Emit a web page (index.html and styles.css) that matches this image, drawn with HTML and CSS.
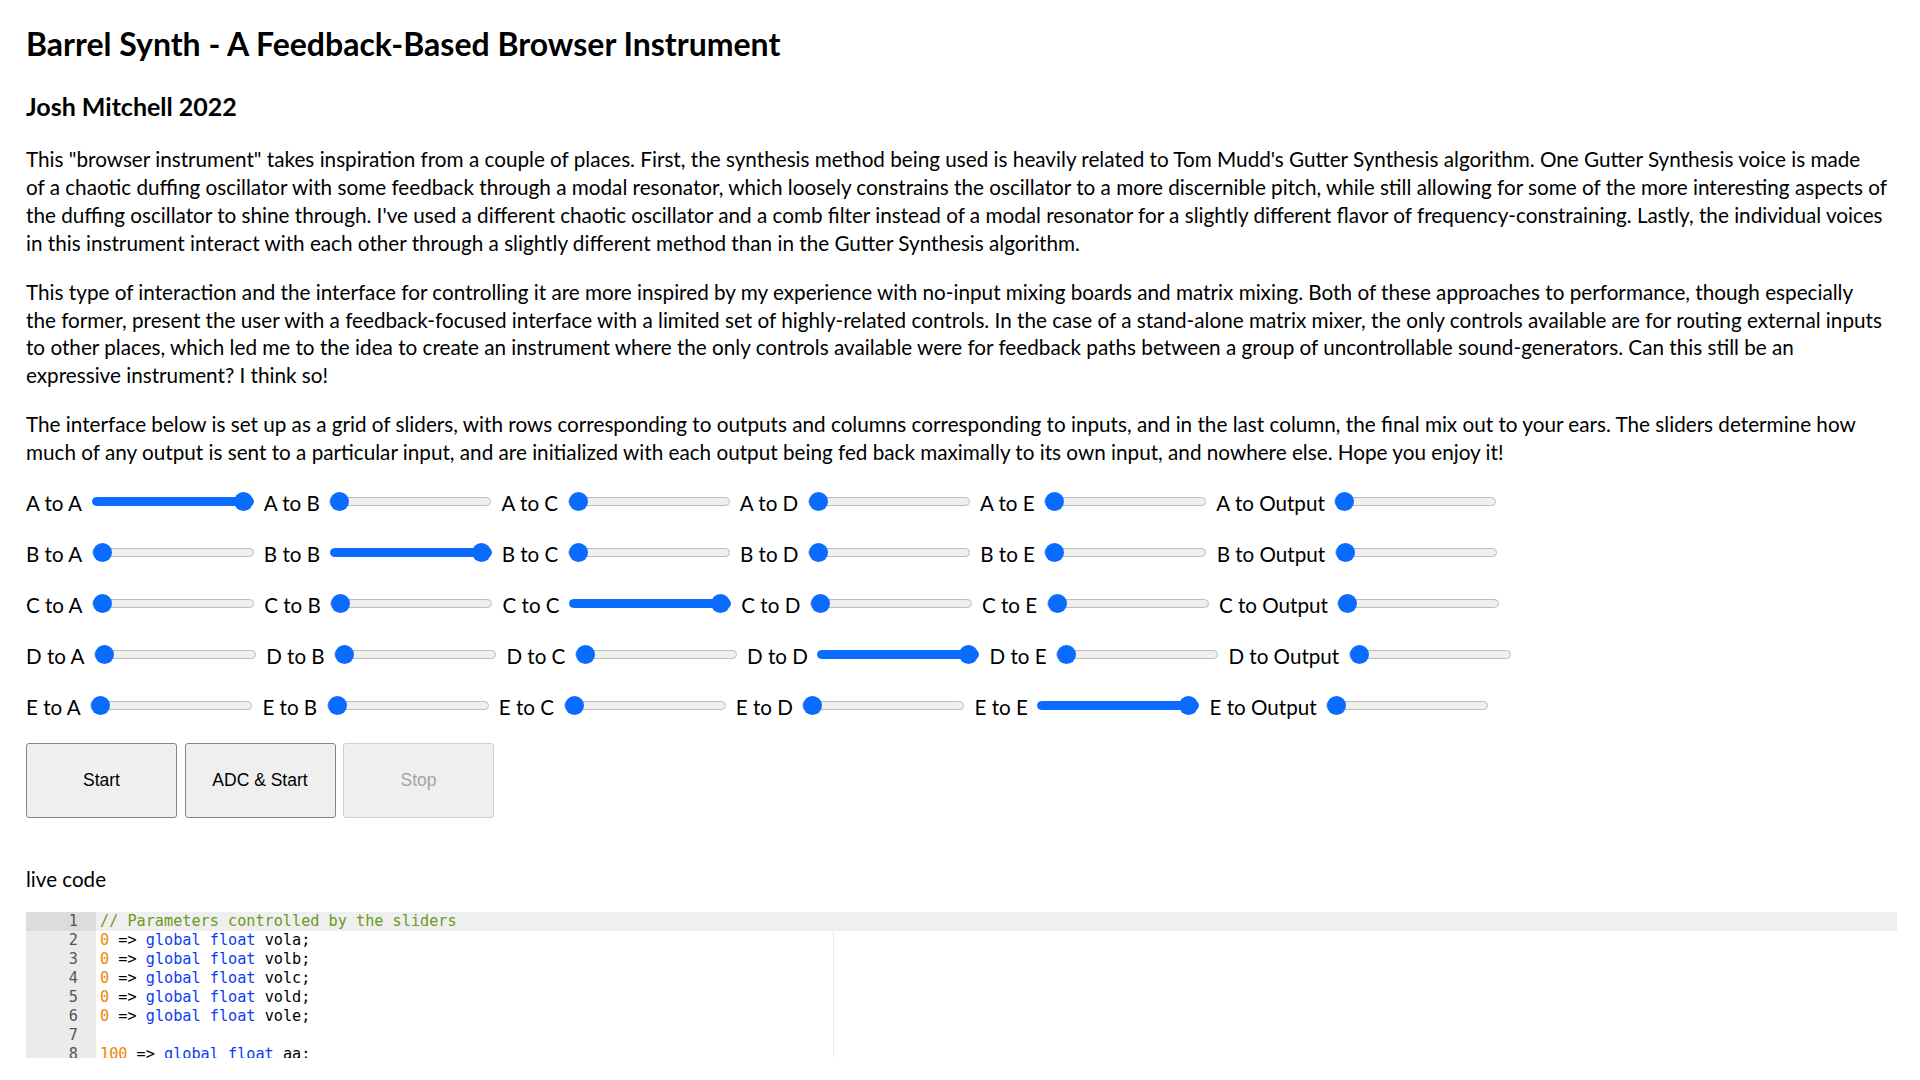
FILE: index.html
```html
<!DOCTYPE html>
<html lang="en">
<head>
<meta charset="utf-8">
<title>Barrel Synth</title>
<link rel="stylesheet" href="styles.css">
</head>
<body>
<main class="page">
  <h1 class="title">Barrel Synth - A Feedback-Based Browser Instrument</h1>
  <h2 class="author">Josh Mitchell 2022</h2>
  <p class="text">This "browser instrument" takes inspiration from a couple of places. First, the synthesis method being used is heavily related to Tom Mudd's Gutter Synthesis algorithm. One Gutter Synthesis voice is made<br>of a chaotic duffing oscillator with some feedback through a modal resonator, which loosely constrains the oscillator to a more discernible pitch, while still allowing for some of the more interesting aspects of<br>the duffing oscillator to shine through. I've used a different chaotic oscillator and a comb filter instead of a modal resonator for a slightly different flavor of frequency-constraining. Lastly, the individual voices<br>in this instrument interact with each other through a slightly different method than in the Gutter Synthesis algorithm.</p>
  <p class="text">This type of interaction and the interface for controlling it are more inspired by my experience with no-input mixing boards and matrix mixing. Both of these approaches to performance, though especially<br>the former, present the user with a feedback-focused interface with a limited set of highly-related controls. In the case of a stand-alone matrix mixer, the only controls available are for routing external inputs<br>to other places, which led me to the idea to create an instrument where the only controls available were for feedback paths between a group of uncontrollable sound-generators. Can this still be an<br>expressive instrument? I think so!</p>
  <p class="text">The interface below is set up as a grid of sliders, with rows corresponding to outputs and columns corresponding to inputs, and in the last column, the final mix out to your ears. The sliders determine how<br>much of any output is sent to a particular input, and are initialized with each output being fed back maximally to its own input, and nowhere else. Hope you enjoy it!</p>

  <div class="matrix">
    <div class="mrow">
      <label class="lbl">A to A</label><input class="slider on" type="range" min="0" max="100" value="100">
      <label class="lbl">A to B</label><input class="slider" type="range" min="0" max="100" value="0">
      <label class="lbl">A to C</label><input class="slider" type="range" min="0" max="100" value="0">
      <label class="lbl">A to D</label><input class="slider" type="range" min="0" max="100" value="0">
      <label class="lbl">A to E</label><input class="slider" type="range" min="0" max="100" value="0">
      <label class="lbl">A to Output</label><input class="slider" type="range" min="0" max="100" value="0">
    </div>
    <div class="mrow">
      <label class="lbl">B to A</label><input class="slider" type="range" min="0" max="100" value="0">
      <label class="lbl">B to B</label><input class="slider on" type="range" min="0" max="100" value="100">
      <label class="lbl">B to C</label><input class="slider" type="range" min="0" max="100" value="0">
      <label class="lbl">B to D</label><input class="slider" type="range" min="0" max="100" value="0">
      <label class="lbl">B to E</label><input class="slider" type="range" min="0" max="100" value="0">
      <label class="lbl">B to Output</label><input class="slider" type="range" min="0" max="100" value="0">
    </div>
    <div class="mrow">
      <label class="lbl">C to A</label><input class="slider" type="range" min="0" max="100" value="0">
      <label class="lbl">C to B</label><input class="slider" type="range" min="0" max="100" value="0">
      <label class="lbl">C to C</label><input class="slider on" type="range" min="0" max="100" value="100">
      <label class="lbl">C to D</label><input class="slider" type="range" min="0" max="100" value="0">
      <label class="lbl">C to E</label><input class="slider" type="range" min="0" max="100" value="0">
      <label class="lbl">C to Output</label><input class="slider" type="range" min="0" max="100" value="0">
    </div>
    <div class="mrow">
      <label class="lbl">D to A</label><input class="slider" type="range" min="0" max="100" value="0">
      <label class="lbl">D to B</label><input class="slider" type="range" min="0" max="100" value="0">
      <label class="lbl">D to C</label><input class="slider" type="range" min="0" max="100" value="0">
      <label class="lbl">D to D</label><input class="slider on" type="range" min="0" max="100" value="100">
      <label class="lbl">D to E</label><input class="slider" type="range" min="0" max="100" value="0">
      <label class="lbl">D to Output</label><input class="slider" type="range" min="0" max="100" value="0">
    </div>
    <div class="mrow">
      <label class="lbl">E to A</label><input class="slider" type="range" min="0" max="100" value="0">
      <label class="lbl">E to B</label><input class="slider" type="range" min="0" max="100" value="0">
      <label class="lbl">E to C</label><input class="slider" type="range" min="0" max="100" value="0">
      <label class="lbl">E to D</label><input class="slider" type="range" min="0" max="100" value="0">
      <label class="lbl">E to E</label><input class="slider on" type="range" min="0" max="100" value="100">
      <label class="lbl">E to Output</label><input class="slider" type="range" min="0" max="100" value="0">
    </div>
  </div>

  <div class="buttons">
    <button class="btn" type="button">Start</button>
    <button class="btn" type="button">ADC &amp; Start</button>
    <button class="btn" type="button" disabled>Stop</button>
  </div>

  <p class="live">live code</p>

  <div class="editor">
    <div class="print-margin"></div>
    <div class="line active"><span class="gut">1</span><span class="code"><span class="c-com">// Parameters controlled by the sliders</span></span></div>
    <div class="line"><span class="gut">2</span><span class="code"><span class="c-num">0</span> =&gt; <span class="c-kw">global</span> <span class="c-kw">float</span> vola;</span></div>
    <div class="line"><span class="gut">3</span><span class="code"><span class="c-num">0</span> =&gt; <span class="c-kw">global</span> <span class="c-kw">float</span> volb;</span></div>
    <div class="line"><span class="gut">4</span><span class="code"><span class="c-num">0</span> =&gt; <span class="c-kw">global</span> <span class="c-kw">float</span> volc;</span></div>
    <div class="line"><span class="gut">5</span><span class="code"><span class="c-num">0</span> =&gt; <span class="c-kw">global</span> <span class="c-kw">float</span> vold;</span></div>
    <div class="line"><span class="gut">6</span><span class="code"><span class="c-num">0</span> =&gt; <span class="c-kw">global</span> <span class="c-kw">float</span> vole;</span></div>
    <div class="line"><span class="gut">7</span><span class="code"></span></div>
    <div class="line"><span class="gut">8</span><span class="code"><span class="c-num">100</span> =&gt; <span class="c-kw">global</span> <span class="c-kw">float</span> aa;</span></div>
    <div class="line"><span class="gut">9</span><span class="code"><span class="c-num">0</span> =&gt; <span class="c-kw">global</span> <span class="c-kw">float</span> ab;</span></div>
    <div class="line"><span class="gut">10</span><span class="code"><span class="c-num">0</span> =&gt; <span class="c-kw">global</span> <span class="c-kw">float</span> ac;</span></div>
  </div>
</main>
</body>
</html>
```
FILE: styles.css
```css
* { box-sizing: border-box; }

html, body {
  margin: 0;
  padding: 0;
  background: #ffffff;
}

body {
  font-family: Lato, "Open Sans", sans-serif;
  color: #000;
}

.page {
  padding: 25px 23px 0 26px;
  display: flex;
  flex-direction: column;
}

.title {
  margin: 0;
  font-size: 32px;
  line-height: 38px;
  font-weight: 700;
}

.author {
  margin: 28px 0 0;
  font-size: 25px;
  line-height: 30px;
  font-weight: 700;
}

.text {
  margin: 21px 0 0;
  font-size: 20.7px;
  line-height: 27.9px;
  white-space: nowrap;
}

.author + .text { margin-top: 25px; }

.matrix {
  margin-top: 19px;
  display: flex;
  flex-direction: column;
  gap: 21px;
}

.mrow {
  display: flex;
  align-items: center;
  height: 30px;
}

.lbl {
  font-size: 20.6px;
  line-height: 25px;
  padding-top: 5px;
  margin-right: 9.5px;
  white-space: nowrap;
}

.slider {
  -webkit-appearance: none;
  appearance: none;
  width: 162px;
  height: 19px;
  margin: 0 10.2px 0 0;
  padding: 0;
  background: transparent;
}

.slider::-webkit-slider-runnable-track {
  height: 9px;
  border-radius: 5px;
  background: #efefef;
  border: 1px solid #bdbdbd;
}

.slider::-webkit-slider-thumb {
  -webkit-appearance: none;
  appearance: none;
  width: 19px;
  height: 19px;
  border-radius: 50%;
  background: #0a6cff;
  border: none;
  margin-top: -6px;
}

.slider.on::-webkit-slider-runnable-track {
  background: #0a6cff;
  border-color: #0a6cff;
}

.buttons {
  margin-top: 23px;
  display: flex;
  gap: 7.5px;
}

.btn {
  width: 151px;
  height: 75px;
  background: #efefef;
  border: 1.5px solid #858585;
  border-radius: 3px;
  font-family: "Liberation Sans", Arial, sans-serif;
  font-size: 17.5px;
  color: #000;
  padding: 0;
}

.btn:disabled {
  color: #a3a3a3;
  border-color: #cfcfcf;
  background: #efefef;
}

.live {
  margin: 48px 0 0;
  font-size: 20.6px;
  line-height: 27.9px;
}

.editor {
  position: relative;
  margin-top: 18px;
  height: 146px;
  overflow: hidden;
  font-family: "DejaVu Sans Mono", monospace;
  font-size: 15.2px;
  background: #fff;
}

.print-margin {
  position: absolute;
  left: 807px;
  top: 0;
  bottom: 0;
  width: 1px;
  background: #ececec;
}

.line {
  position: relative;
  display: flex;
  height: 19px;
  line-height: 19px;
  white-space: pre;
}

.gut {
  flex: 0 0 70px;
  background: #ebebeb;
  color: #555;
  text-align: right;
  padding-right: 18px;
}

.code {
  flex: 1;
  padding-left: 4px;
  color: #000;
}

.line.active .gut { background: #dcdcdc; }
.line.active .code { background: #efefef; }

.c-com { color: #6b9a1f; }
.c-num { color: #f08400; }
.c-kw { color: #0b3cf5; }
```
